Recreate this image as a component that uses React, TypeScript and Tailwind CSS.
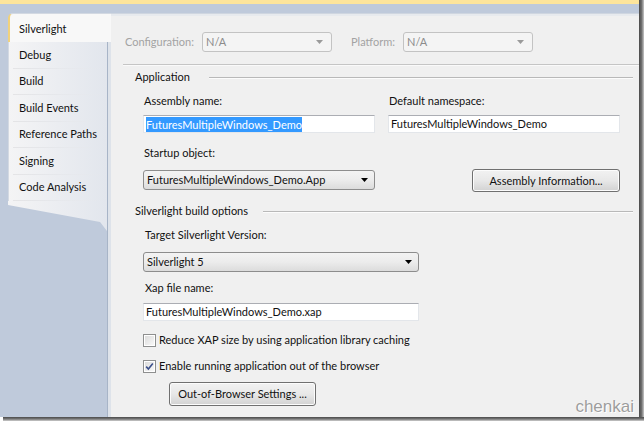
import React from "react";

const font = "font-['Lato',sans-serif]";

function Arrow({ gray }: { gray?: boolean }) {
  return (
    <svg width="7" height="4" viewBox="0 0 7 4" className="shrink-0">
      <polygon points="0,0 7,0 3.5,4" fill={gray ? "#9a9a9a" : "#000"} />
    </svg>
  );
}

function DisabledSelect({ value }: { value: string }) {
  return (
    <div className="w-[130px] h-[20px] flex items-center justify-between px-[3px] pr-[8px] border border-[#c3c3c3] rounded-[3px] bg-[#f4f4f4] text-[#8c8c8c]">
      <span>{value}</span>
      <Arrow gray />
    </div>
  );
}

function Select({ value, w }: { value: string; w: string }) {
  return (
    <div
      className={`${w} h-[20px] flex items-center justify-between pl-[3px] pr-[6px] border border-[#8d8d8d] rounded-[3px] bg-gradient-to-b from-[#f3f3f3] via-[#ececec] to-[#dcdcdc] text-[#111]`}
    >
      <span>{value}</span>
      <Arrow />
    </div>
  );
}

function Input({ w, children }: { w: string; children: React.ReactNode }) {
  return (
    <div className={`${w} h-[18px] flex items-center pl-[2px] bg-white border border-[#e3e6ea] border-t-[#abadb3] text-[#111]`}>
      {children}
    </div>
  );
}

function Button({ w, h, children }: { w: string; h: string; children: React.ReactNode }) {
  return (
    <div
      className={`${w} ${h} flex items-center justify-center border border-[#707070] rounded-[3px] bg-gradient-to-b from-[#f2f2f2] via-[#e8e8e8] to-[#d2d2d2] text-[#111] shadow-[inset_0_0_0_1px_#fcfcfc]`}
    >
      {children}
    </div>
  );
}

function Checkbox({ checked }: { checked?: boolean }) {
  return (
    <div className="w-[13px] h-[13px] border border-[#8e8f8f] bg-white p-[1px] shrink-0">
      <div className="w-full h-full bg-gradient-to-br from-[#dcdcdc] to-[#f8f8f8] flex items-center justify-center">
        {checked && (
          <svg width="9" height="9" viewBox="0 0 9 9">
            <path d="M1.2 4.6 L3.4 7 L7.8 1.6" fill="none" stroke="#3b4f8a" strokeWidth="1.6" />
          </svg>
        )}
      </div>
    </div>
  );
}

const tabs = ["Debug", "Build", "Build Events", "Reference Paths", "Signing", "Code Analysis"];

export default function App() {
  return (
    <div className={`w-[644px] h-[421px] overflow-hidden bg-white flex flex-col relative ${font} text-[11px] leading-[16px]`}>
      <div className="flex h-[417px]">
        <div className="w-[639px] flex flex-col">
          <div className="h-[4px] bg-[#fde59c] shrink-0" />
          <div className="flex flex-1 min-h-0">
            {/* left tabs */}
            <div className="w-[111px] shrink-0 bg-[#bfcadb] flex flex-col pt-[9px]">
              <div className="ml-[8px] h-[29px] shrink-0 bg-[#f8f8f8] rounded-tl-[5px] border-t border-[#d3d9e2] border-l-[2px] border-l-[#f1d27c] pl-[9px] pt-[7px] text-[#111]">
                Silverlight
              </div>
              <div className="flex flex-1 min-h-0">
                <div className="ml-[8px] w-[99px] flex flex-col">
                  {tabs.map((t) => (
                    <div
                      key={t}
                      className="h-[26.5px] shrink-0 bg-gradient-to-r from-[#f4f4f5] to-[#e2e6ed] border-l border-[#d3d9e2] flex flex-col"
                    >
                      <div className="flex-1 flex items-center pl-[10px] text-[#111] whitespace-nowrap">{t}</div>
                      <div className="h-px mx-[4px] bg-gradient-to-r from-[#e4e4e6] via-[#e6e8ec] to-transparent" />
                    </div>
                  ))}
                  <div className="h-[30px] shrink-0 bg-gradient-to-r from-[#f4f4f5] to-[#e2e6ed] [clip-path:polygon(0_0,100%_0,100%_100%,93%_70%,0_4px)]" />
                </div>
                <div className="w-[4px] border-l border-[#a7b4c7] bg-[#dee3ea]" />
              </div>
            </div>
            {/* content */}
            <div className="flex-1 flex flex-col bg-[#f0f0f0] text-[#111]">
              <div className="h-[9px] bg-[#bfcadb] shrink-0" />
              <div className="h-px bg-[#cfd6e0] shrink-0" />
              <div className="h-[2px] bg-[#e7eaee] shrink-0" />
              {/* config row */}
              <div className="mt-[16px] h-[20px] flex items-center pl-[14px]">
                <span className="w-[77px] text-[#a3a3a3]">Configuration:</span>
                <DisabledSelect value="N/A" />
                <span className="ml-[19px] w-[52px] text-[#a3a3a3]">Platform:</span>
                <DisabledSelect value="N/A" />
              </div>
              <div className="mt-[12px] ml-[12px] h-px bg-[#c5c5c5] shrink-0" />
              <div className="h-px ml-[12px] bg-[#fafafa] shrink-0" />
              {/* Application */}
              <div className="mt-[3px] h-[16px] flex items-center pl-[24px] pr-[6px]">
                <span>Application</span>
                <div className="flex-1 ml-[19px] h-px bg-[#b9b9b9] shadow-[0_1px_0_#fcfcfc]" />
              </div>
              <div className="mt-[8px] flex pl-[33px]">
                <span className="w-[245px]">Assembly name:</span>
                <span>Default namespace:</span>
              </div>
              <div className="mt-[6px] flex pl-[32px] gap-[13px]">
                <Input w="w-[232px]">
                  <span className="bg-[#3399ff] text-white leading-[15px]">FuturesMultipleWindows_Demo</span>
                </Input>
                <Input w="w-[232px]">FuturesMultipleWindows_Demo</Input>
              </div>
              <div className="mt-[12px] pl-[33px]">Startup object:</div>
              <div className="mt-[8px] h-[23px] flex items-start pl-[32px]">
                <div className="mt-[1px]">
                  <Select value="FuturesMultipleWindows_Demo.App" w="w-[232px]" />
                </div>
                <div className="ml-[97px]">
                  <Button w="w-[148px]" h="h-[23px]">Assembly Information...</Button>
                </div>
              </div>
              {/* Silverlight build options */}
              <div className="mt-[11px] h-[16px] flex items-center pl-[24px] pr-[6px]">
                <span>Silverlight build options</span>
                <div className="flex-1 ml-[15px] h-px bg-[#b9b9b9] shadow-[0_1px_0_#fcfcfc]" />
              </div>
              <div className="mt-[8px] pl-[34px]">Target Silverlight Version:</div>
              <div className="mt-[9px] pl-[32px]">
                <Select value="Silverlight 5" w="w-[276px]" />
              </div>
              <div className="mt-[8px] pl-[34px]">Xap file name:</div>
              <div className="mt-[7px] pl-[32px]">
                <Input w="w-[276px]">FuturesMultipleWindows_Demo.xap</Input>
              </div>
              <div className="mt-[11px] h-[16px] flex items-center pl-[32px] gap-[3px]">
                <Checkbox />
                <span>Reduce XAP size by using application library caching</span>
              </div>
              <div className="mt-[10px] h-[16px] flex items-center pl-[32px] gap-[3px]">
                <Checkbox checked />
                <span>Enable running application out of the browser</span>
              </div>
              <div className="mt-[8px] pl-[58px]">
                <Button w="w-[147px]" h="h-[24px]">Out-of-Browser Settings ...</Button>
              </div>
            </div>
          </div>
        </div>
        <div className="w-[5px] bg-gradient-to-r from-[#4a4a4a] via-[#6e6e6e] to-[#c8c8c8]" />
      </div>
      <div className="h-[4px] ml-[3px] bg-gradient-to-b from-[#4a4a4a] via-[#777777] to-[#d0d0d0]" />
      <div className="absolute right-[10px] bottom-[4px] font-['Liberation_Sans',sans-serif] text-[17px] leading-[20px] text-[#9d9d9d] [text-shadow:0_0_1px_#fff,1px_1px_0_#fff]">
        chenkai
      </div>
    </div>
  );
}
